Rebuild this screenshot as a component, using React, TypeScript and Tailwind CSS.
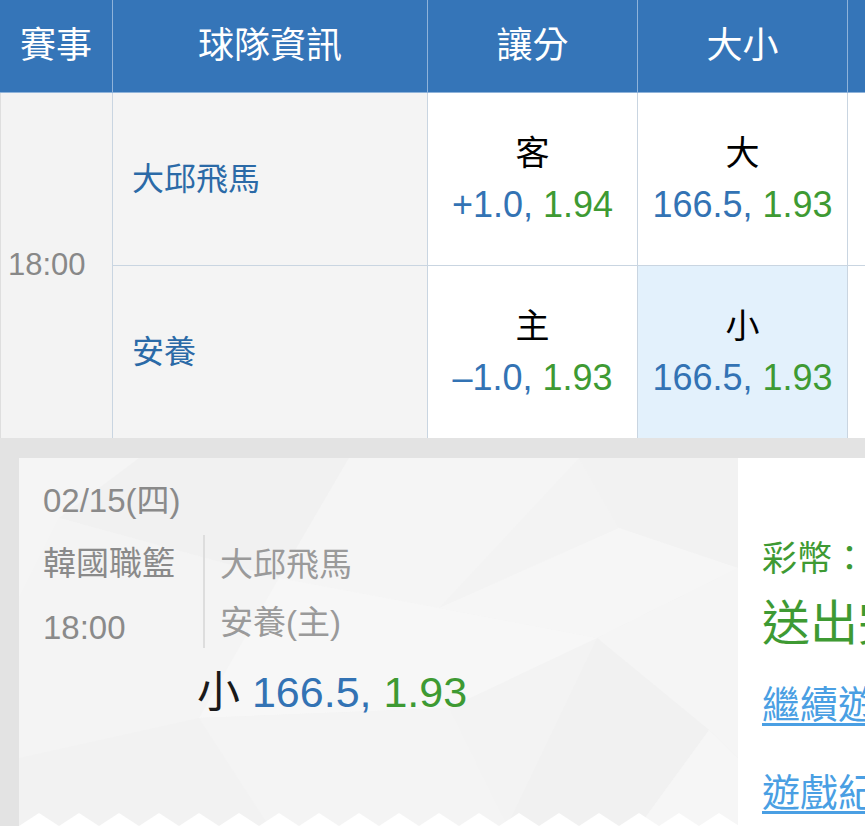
import React from "react";

const FONT = "font-['Liberation_Sans','Noto_Sans_CJK_TC',sans-serif]";

function OddsCell({
  label,
  a,
  b,
  selected,
  last,
}: {
  label: string;
  a: string;
  b: string;
  selected?: boolean;
  last?: boolean;
}) {
  return (
    <div
      className={`flex flex-col items-center justify-center border-r border-[#c9d5e1] ${
        last ? "" : "border-b"
      } ${selected ? "bg-[#e3f1fc]" : "bg-white"}`}
    >
      <div className="text-[34px] leading-[52px] text-black">{label}</div>
      <div className="text-[36px] leading-[52px] whitespace-nowrap">
        <span className="text-[#3373b4]">{a}, </span>
        <span className="text-[#3e9a33]">{b}</span>
      </div>
    </div>
  );
}

function CardBackground() {
  return (
    <svg
      className="absolute inset-0"
      width="719"
      height="368"
      viewBox="0 0 719 368"
    >
      <rect width="719" height="368" fill="#f3f3f3" />
      <polygon points="0,0 120,0 0,140" fill="#f5f5f5" />
      <polygon points="120,0 330,0 260,120 40,60" fill="#f1f1f1" />
      <polygon points="330,0 560,0 420,150 260,120" fill="#f5f5f5" />
      <polygon points="560,0 719,0 719,110 600,70" fill="#f2f2f2" />
      <polygon points="420,150 600,70 719,110 578,180" fill="#f6f6f6" />
      <polygon points="0,140 40,60 260,120 180,260 0,300" fill="#f4f4f4" />
      <polygon points="260,120 420,150 578,180 430,250 180,260" fill="#f7f7f7" />
      <polygon points="578,180 719,110 719,300 690,272" fill="#f5f5f5" />
      <polygon points="578,180 690,272 620,368 488,368" fill="#f1f1f1" />
      <polygon points="0,300 180,260 250,368 0,368" fill="#f2f2f2" />
      <polygon points="180,260 430,250 488,368 250,368" fill="#f4f4f4" />
      <polygon points="690,272 719,300 719,368 620,368" fill="#f6f6f6" />
      <g>
        {Array.from({ length: 19 }).map((_, i) => {
          const x = i * 40;
          return (
            <polygon
              key={i}
              points={`${x},368 ${x + 20},355 ${x + 40},368`}
              fill="#ffffff"
            />
          );
        })}
      </g>
    </svg>
  );
}

export default function App() {
  return (
    <div className={`w-[865px] h-[826px] overflow-hidden bg-white ${FONT}`}>
      {/* Table */}
      <div className="grid w-[1058px] grid-cols-[113px_315px_210px_210px_210px] grid-rows-[93px_173px_172px]">
        {/* Header */}
        <div className="flex items-center justify-center bg-[#3575b8] border-r border-b border-[#8fb3da] text-[36px] text-white">
          賽事
        </div>
        <div className="flex items-center justify-center bg-[#3575b8] border-r border-b border-[#8fb3da] text-[36px] text-white">
          球隊資訊
        </div>
        <div className="flex items-center justify-center bg-[#3575b8] border-r border-b border-[#8fb3da] text-[36px] text-white">
          讓分
        </div>
        <div className="flex items-center justify-center bg-[#3575b8] border-r border-b border-[#8fb3da] text-[36px] text-white">
          大小
        </div>
        <div className="bg-[#3575b8] border-r border-b border-[#8fb3da]" />

        {/* Body */}
        <div className="row-span-2 flex items-center bg-[#f3f3f3] border-l border-l-[#dedede] border-r border-[#c9d5e1] pl-[7px] text-[31px] text-[#888888]">
          18:00
        </div>
        <div className="flex items-center bg-[#f4f4f4] border-r border-b border-[#c9d5e1] pl-[19px] text-[32px] text-[#2b6aa7]">
          大邱飛馬
        </div>
        <OddsCell label="客" a="+1.0" b="1.94" />
        <OddsCell label="大" a="166.5" b="1.93" />
        <div className="bg-white border-b border-[#c9d5e1]" />

        <div className="flex items-center bg-[#f4f4f4] border-r border-[#c9d5e1] pl-[19px] text-[32px] text-[#2b6aa7]">
          安養
        </div>
        <OddsCell label="主" a="–1.0" b="1.93" last />
        <OddsCell label="小" a="166.5" b="1.93" selected last />
        <div className="bg-white" />
      </div>

      {/* Bet slip card */}
      <div className="flex bg-[#e3e3e3] pt-[20px] pl-[19px]">
        <div className="relative h-[368px] w-[719px] shrink-0 overflow-hidden">
          <CardBackground />
          <div className="relative pl-[24px] pt-[24px]">
            <div className="text-[33px] leading-[38px] text-[#8a8a8a]">
              02/15(四)
            </div>
            <div className="mt-[15px] flex">
              <div className="w-[160px] text-[33px] text-[#8a8a8a]">
                <div className="leading-[58px]">韓國職籃</div>
                <div className="mt-[6px] leading-[58px]">18:00</div>
              </div>
              <div className="h-[113px] border-l-2 border-[#dddddd] pl-[15px] text-[33px] text-[#9a9a9a]">
                <div className="leading-[60px]">大邱飛馬</div>
                <div className="leading-[55px]">安養(主)</div>
              </div>
            </div>
            <div className="ml-[154px] mt-[10px] whitespace-nowrap text-[43px] leading-[50px]">
              <span className="text-[#1a1a1a]">小 </span>
              <span className="text-[#3373b4]">166.5, </span>
              <span className="text-[#3e9a33]">1.93</span>
            </div>
          </div>
        </div>
        <div className="h-[368px] flex-1 overflow-hidden bg-white pl-[24px] pt-[79px] whitespace-nowrap">
          <div className="text-[35px] leading-[44px] text-[#3e9a33]">彩幣：</div>
          <div className="mt-[13px] text-[48px] leading-[60px] text-[#3e9a33]">
            送出完成
          </div>
          <div className="mt-[26px] text-[38px] leading-[50px] text-[#4a9fe3] underline underline-offset-[5px]">
            繼續遊戲
          </div>
          <div className="mt-[38px] text-[38px] leading-[50px] text-[#4a9fe3] underline underline-offset-[5px]">
            遊戲紀錄
          </div>
        </div>
      </div>
    </div>
  );
}
